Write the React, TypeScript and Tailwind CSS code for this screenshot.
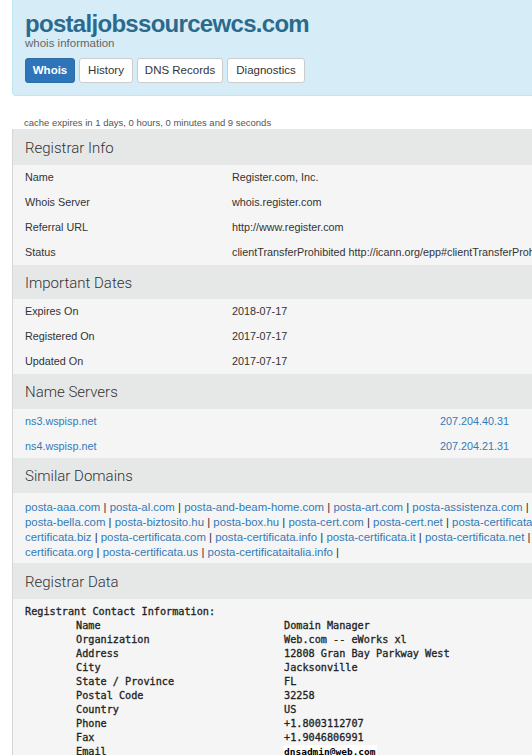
import React from 'react';

const registrarInfo = [
  { label: 'Name', value: 'Register.com, Inc.' },
  { label: 'Whois Server', value: 'whois.register.com' },
  { label: 'Referral URL', value: 'http://www.register.com' },
  { label: 'Status', value: 'clientTransferProhibited http://icann.org/epp#clientTransferProhibited' },
];

const dates = [
  { label: 'Expires On', value: '2018-07-17' },
  { label: 'Registered On', value: '2017-07-17' },
  { label: 'Updated On', value: '2017-07-17' },
];

const nameServers = [
  { host: 'ns3.wspisp.net', ip: '207.204.40.31' },
  { host: 'ns4.wspisp.net', ip: '207.204.21.31' },
];

// each line of the similar domains block, as it wraps in the page
const similarLines: { items: string[]; trailing: boolean }[] = [
  { items: ['posta-aaa.com', 'posta-al.com', 'posta-and-beam-home.com', 'posta-art.com', 'posta-assistenza.com'], trailing: true },
  { items: ['posta-bella.com', 'posta-biztosito.hu', 'posta-box.hu', 'posta-cert.com', 'posta-cert.net', 'posta-certificata-'], trailing: false },
  { items: ['certificata.biz', 'posta-certificata.com', 'posta-certificata.info', 'posta-certificata.it', 'posta-certificata.net'], trailing: true },
  { items: ['certificata.org', 'posta-certificata.us', 'posta-certificataitalia.info'], trailing: true },
];

const contact = [
  { label: 'Name', value: 'Domain Manager' },
  { label: 'Organization', value: 'Web.com -- eWorks xl' },
  { label: 'Address', value: '12808 Gran Bay Parkway West' },
  { label: 'City', value: 'Jacksonville' },
  { label: 'State / Province', value: 'FL' },
  { label: 'Postal Code', value: '32258' },
  { label: 'Country', value: 'US' },
  { label: 'Phone', value: '+1.8003112707' },
  { label: 'Fax', value: '+1.9046806991' },
];

function SectionHeader({ title, height }: { title: string; height: string }) {
  return (
    <div className={`flex items-center bg-[#e6e7e7] pl-[12px] pt-[2px] ${height}`}>
      <h3 className="font-['Roboto',sans-serif] text-[15px] font-light text-[#333]">{title}</h3>
    </div>
  );
}

function Tab({ label, active, width }: { label: string; active?: boolean; width: string }) {
  return (
    <button
      className={`flex h-[25px] items-center justify-center rounded-[3px] border text-[11.5px] ${width} ${
        active ? 'border-[#2e6da4] bg-[#2d74b8] font-bold text-white' : 'border-[#ccc] bg-white text-[#333]'
      }`}
    >
      {label}
    </button>
  );
}

export default function App() {
  return (
    <div className="h-[755px] w-[532px] overflow-hidden bg-white font-['Liberation_Sans',Arial,sans-serif] text-[#333]">
      <div className="w-[640px] pl-[12px]">
        {/* Domain header */}
        <div className="-mt-px rounded-bl-[4px] border border-[#bce8f1] bg-[#d6edf8] pb-[12px] pl-[12px]">
          <h1 className="pt-[11px] text-[24px] font-bold leading-[26px] tracking-[-0.7px] text-[#2b6a8c]">postaljobssourcewcs.com</h1>
          <div className="text-[11.5px] leading-[12px] text-[#666]">whois information</div>
          <div className="mt-[9px] flex gap-[4px]">
            <Tab label="Whois" active width="w-[50px]" />
            <Tab label="History" width="w-[54px]" />
            <Tab label="DNS Records" width="w-[86px]" />
            <Tab label="Diagnostics" width="w-[78px]" />
          </div>
        </div>

        <div className="mt-[20px] pl-[12px] text-[9.5px] leading-[13px] text-[#555]">
          cache expires in 1 days, 0 hours, 0 minutes and 9 seconds
        </div>

        <div className="border-l border-[#d6d6d6] bg-[#f5f5f5]">
          <SectionHeader title="Registrar Info" height="h-[36px]" />
          {registrarInfo.map((row) => (
            <div key={row.label} className="flex h-[25px] items-center pl-[12px] text-[10.8px] whitespace-nowrap">
              <span className="w-[207px]">{row.label}</span>
              <span>{row.value}</span>
            </div>
          ))}

          <SectionHeader title="Important Dates" height="h-[34px]" />
          {dates.map((row) => (
            <div key={row.label} className="flex h-[25px] items-center pl-[12px] text-[10.8px]">
              <span className="w-[207px]">{row.label}</span>
              <span>{row.value}</span>
            </div>
          ))}

          <SectionHeader title="Name Servers" height="h-[35px]" />
          {nameServers.map((ns, i) => (
            <div key={ns.host} className={`flex items-center pl-[12px] text-[10.8px] text-[#337ab7] ${i === 0 ? 'h-[25px]' : 'h-[24px]'}`}>
              <span className="w-[415px]">{ns.host}</span>
              <span>{ns.ip}</span>
            </div>
          ))}

          <SectionHeader title="Similar Domains" height="h-[35px]" />
          <div className="pt-[7px] pb-[3px] pl-[12px] text-[11.4px] leading-[15px]">
            {similarLines.map((line, i) => (
              <div key={i} className="whitespace-nowrap">
                {line.items.map((d, j) => (
                  <React.Fragment key={d}>
                    <a className="text-[#337ab7]">{d}</a>
                    {(j < line.items.length - 1 || line.trailing) && <span className="text-[#333]"> | </span>}
                  </React.Fragment>
                ))}
              </div>
            ))}
          </div>

          <SectionHeader title="Registrar Data" height="h-[36px]" />
          <div className="pt-[6px] pl-[12px] font-['DejaVu_Sans_Mono',monospace] text-[10.2px] leading-[14px] text-[#222] [-webkit-text-stroke:0.3px_#222]">
            <div>Registrant Contact Information:</div>
            {contact.map((row) => (
              <div key={row.label} className="flex whitespace-pre pl-[51px]">
                <span className="w-[208px]">{row.label}</span>
                <span>{row.value}</span>
              </div>
            ))}
            <div className="flex pl-[51px]">
              <span className="w-[207px]">Email</span>
              <span className="bg-white px-[1px] text-[9.5px] font-bold text-black [-webkit-text-stroke:0px]">dnsadmin@web.com</span>
            </div>
          </div>
        </div>
      </div>
    </div>
  );
}
